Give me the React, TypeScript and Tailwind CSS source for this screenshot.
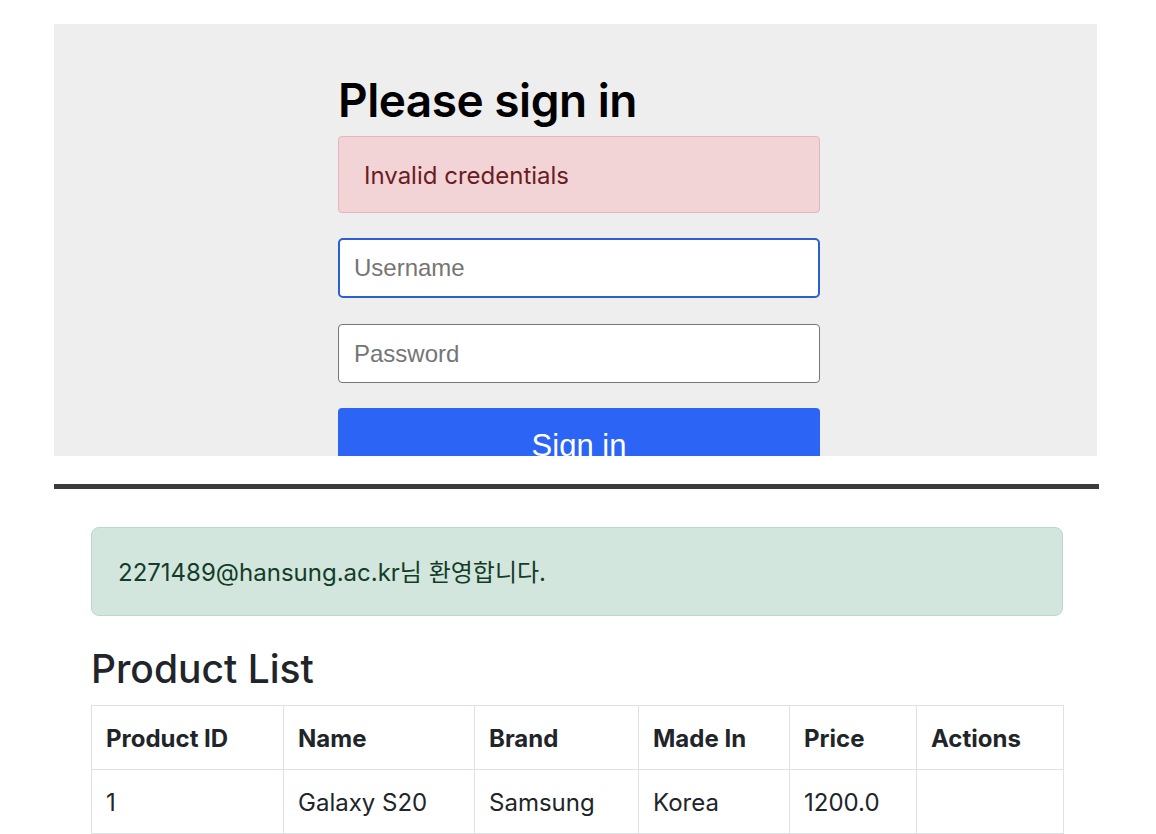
const products = [
  { id: 1, name: "Galaxy S20", brand: "Samsung", madeIn: "Korea", price: "1200.0" },
];

const columns = [
  { label: "Product ID", width: "w-[192px]" },
  { label: "Name", width: "w-[191px]" },
  { label: "Brand", width: "w-[164px]" },
  { label: "Made In", width: "w-[151px]" },
  { label: "Price", width: "w-[127px]" },
  { label: "Actions", width: "w-[147px]" },
];

const sysFont = "font-['Inter','Noto_Sans_CJK_KR',sans-serif]";

const SignIn = () => (
  <div className="ml-[54px] mt-[24px] h-[432px] w-[1043px] overflow-hidden bg-[#eeeeee]">
    <div className="ml-[284px] w-[482px] pt-[53px]">
      <h1 className={`${sysFont} text-[46px] font-semibold leading-none tracking-[-0.5px] text-black`}>
        Please sign in
      </h1>
      <div
        className={`${sysFont} mt-[13px] flex h-[77px] items-center rounded-[4px] border border-[#e6b5b9] bg-[#f2d4d6] pl-[25px] pt-[3px] text-[24px] text-[#6b1c23]`}
      >
        Invalid credentials
      </div>
      <input
        autoFocus
        placeholder="Username"
        className="mt-[25px] block h-[60px] w-full rounded-[5px] border-2 border-[#2b5fd3] bg-white px-[14px] font-['Liberation_Sans',Arial,sans-serif] text-[24px] text-black outline-none placeholder:text-[#757575]"
      />
      <input
        type="password"
        placeholder="Password"
        className="mt-[26px] block h-[59px] w-full rounded-[4px] border border-[#767676] bg-white px-[15px] font-['Liberation_Sans',Arial,sans-serif] text-[24px] text-black outline-none placeholder:text-[#757575]"
      />
      <button className="mt-[25px] block h-[64px] w-full rounded-[4px] bg-[#2c65f6] pt-[6px] font-['Liberation_Sans',Arial,sans-serif] text-[31px] leading-[64px] text-white">
        Sign in
      </button>
    </div>
  </div>
);

const ProductList = () => (
  <div className={`${sysFont} ml-[91px] w-[972px] text-[#212529]`}>
    <div className="mt-[38px] flex h-[89px] items-center rounded-[8px] border border-[#b9d9c9] bg-[#d3e6dd] pl-[26px] pt-[3px] text-[24px] text-[#133c29]">
      2271489@hansung.ac.kr님 환영합니다.
    </div>
    <h2 className="mt-[33px] text-[39px] font-medium leading-none">Product List</h2>
    <table className="mt-[17px] w-full table-fixed border-collapse text-[24px]">
      <colgroup>
        {columns.map((c) => (
          <col key={c.label} className={c.width} />
        ))}
      </colgroup>
      <thead>
        <tr className="h-[64px]">
          {columns.map((c) => (
            <th key={c.label} className="border border-[#dee2e6] px-[14px] pt-[3px] text-left font-bold">
              {c.label}
            </th>
          ))}
        </tr>
      </thead>
      <tbody>
        {products.map((p) => (
          <tr key={p.id} className="h-[64px]">
            <td className="border border-[#dee2e6] px-[14px] pt-[3px]">{p.id}</td>
            <td className="border border-[#dee2e6] px-[14px] pt-[3px]">{p.name}</td>
            <td className="border border-[#dee2e6] px-[14px] pt-[3px]">{p.brand}</td>
            <td className="border border-[#dee2e6] px-[14px] pt-[3px]">{p.madeIn}</td>
            <td className="border border-[#dee2e6] px-[14px] pt-[3px]">{p.price}</td>
            <td className="border border-[#dee2e6] px-[14px] pt-[3px]"></td>
          </tr>
        ))}
      </tbody>
    </table>
  </div>
);

export default function App() {
  return (
    <div className="min-h-screen bg-white pb-[40px]">
      <SignIn />
      <div className="ml-[54px] mt-[28px] h-[5px] w-[1045px] bg-[#3b3b3b]" />
      <ProductList />
    </div>
  );
}
